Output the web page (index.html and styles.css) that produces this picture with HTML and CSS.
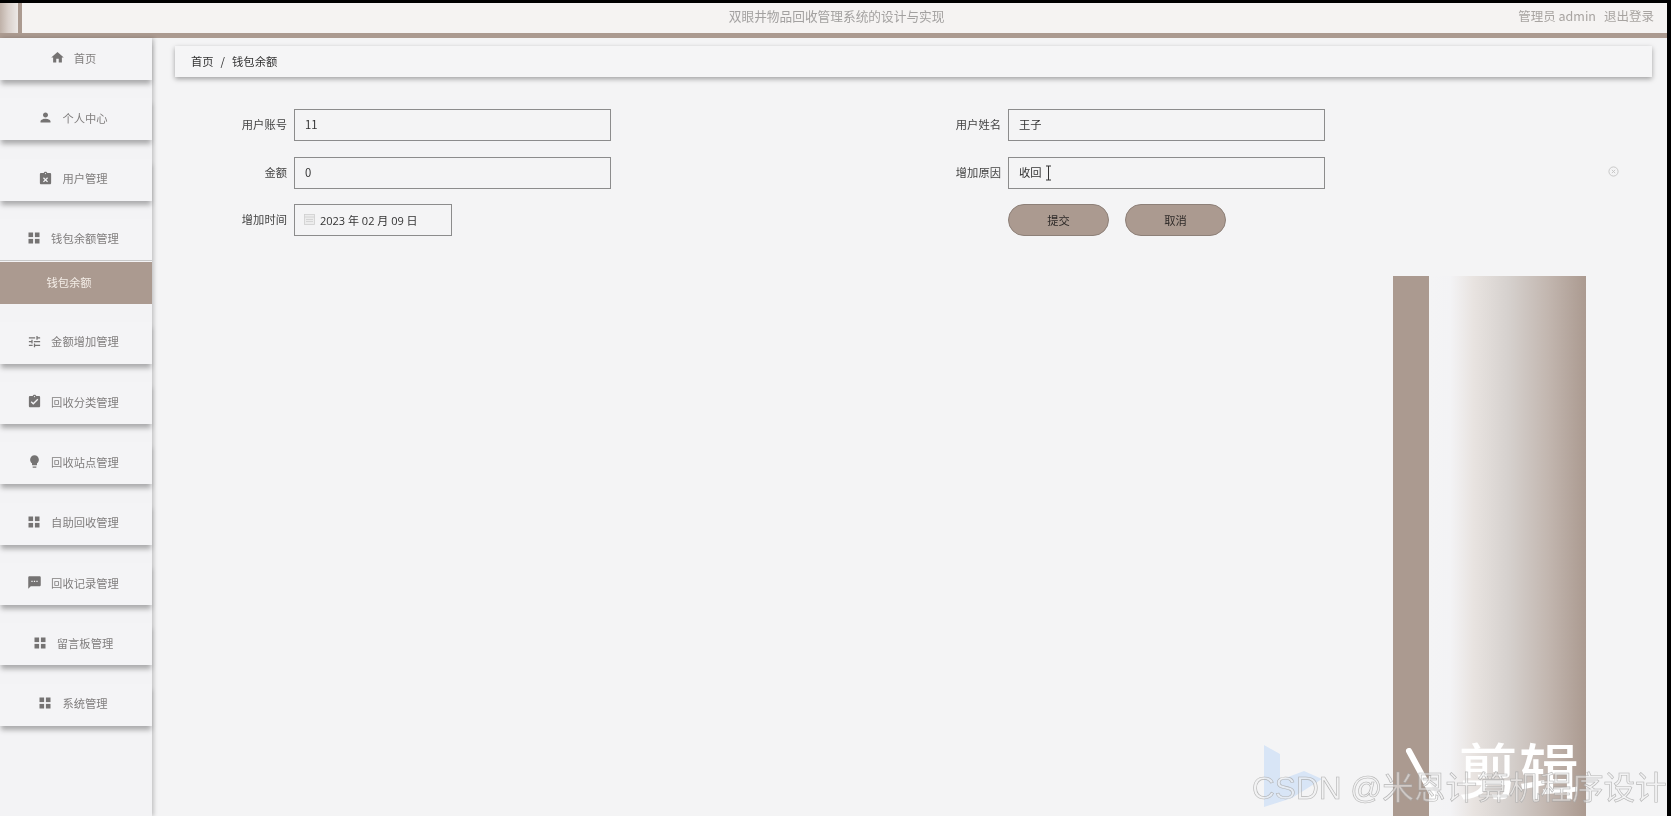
FILE: index.html
```html
<!DOCTYPE html>
<html lang="zh-CN">
<head>
<meta charset="utf-8">
<title>双眼井物品回收管理系统的设计与实现</title>
<link rel="stylesheet" href="styles.css">
</head>
<body>
<svg class="defs" width="0" height="0" aria-hidden="true">
  <symbol id="i-grid" viewBox="0 0 12 12"><rect x="0.5" y="0.5" width="4.6" height="4.6"/><rect x="6.9" y="0.5" width="4.6" height="4.6"/><rect x="0.5" y="6.9" width="4.6" height="4.6"/><rect x="6.9" y="6.9" width="4.6" height="4.6"/></symbol>
</svg>
<div class="app">
  <header class="topbar">
    <div class="logo"></div>
    <div class="title">双眼井物品回收管理系统的设计与实现</div>
    <div class="user"><span>管理员 admin</span><span>退出登录</span></div>
  </header>
  <div class="body">
    <nav class="side">
      <a class="item"><svg class="ic" viewBox="0 0 24 24"><path d="M10 20v-6h4v6h5v-8h3L12 3 2 12h3v8z"/></svg>首页</a>
      <a class="item"><svg class="ic" viewBox="0 0 24 24"><path d="M12 12c2.21 0 4-1.79 4-4s-1.79-4-4-4-4 1.79-4 4 1.79 4 4 4zm0 2c-2.67 0-8 1.34-8 4v2h16v-2c0-2.66-5.33-4-8-4z"/></svg>个人中心</a>
      <a class="item"><svg class="ic" viewBox="0 0 24 24"><path d="M19 3h-4.18C14.4 1.84 13.3 1 12 1c-1.3 0-2.4.84-2.82 2H5c-1.1 0-2 .9-2 2v14c0 1.1.9 2 2 2h14c1.1 0 2-.9 2-2V5c0-1.1-.9-2-2-2zm-7 0c.55 0 1 .45 1 1s-.45 1-1 1-1-.45-1-1 .45-1 1-1zm4 13.6L14.6 18 12 15.4 9.400 18 8 16.600 10.600 14 8 11.400 9.400 10 12 12.600 14.600 10 16 11.400 13.400 14z"/></svg>用户管理</a>
      <div class="group">
        <a class="item joined"><svg class="ic grid" viewBox="0 0 12 12"><use href="#i-grid"/></svg>钱包余额管理</a>
        <a class="sub">钱包余额</a>
      </div>
      <a class="item"><svg class="ic" viewBox="0 0 24 24"><path d="M3 17v2h6v-2H3zM3 5v2h10V5H3zm10 16v-2h8v-2h-8v-2h-2v6h2zM7 9v2H3v2h4v2h2V9H7zm14 4v-2H11v2h10zm-6-4h2V7h4V5h-4V3h-2v6z"/></svg>金额增加管理</a>
      <a class="item"><svg class="ic" viewBox="0 0 24 24"><path d="M19 3h-4.180C14.400 1.840 13.300 1 12 1c-1.300 0-2.400.840-2.820 2H5c-1.100 0-2 .900-2 2v14c0 1.100.900 2 2 2h14c1.100 0 2-.900 2-2V5c0-1.100-.900-2-2-2zm-7 0c.550 0 1 .450 1 1s-.450 1-1 1-1-.450-1-1 .450-1 1-1zm-2 14l-4-4 1.410-1.410L10 14.170l6.590-6.590L18 9l-8 8z"/></svg>回收分类管理</a>
      <a class="item"><svg class="ic" viewBox="0 0 24 24"><path d="M9 21c0 .55.45 1 1 1h4c.55 0 1-.45 1-1v-1H9v1zm3-19C8.140 2 5 5.140 5 9c0 2.380 1.190 4.470 3 5.740V17c0 .55.45 1 1 1h6c.55 0 1-.45 1-1v-2.260c1.810-1.270 3-3.360 3-5.740 0-3.860-3.140-7-7-7z"/></svg>回收站点管理</a>
      <a class="item"><svg class="ic grid" viewBox="0 0 12 12"><use href="#i-grid"/></svg>自助回收管理</a>
      <a class="item"><svg class="ic" viewBox="0 0 24 24"><path d="M20 2H4c-1.100 0-1.990.9-1.990 2L2 22l4-4h14c1.100 0 2-.9 2-2V4c0-1.100-.9-2-2-2zM9 11H7V9h2v2zm4 0h-2V9h2v2zm4 0h-2V9h2v2z"/></svg>回收记录管理</a>
      <a class="item"><svg class="ic grid" viewBox="0 0 12 12"><use href="#i-grid"/></svg>留言板管理</a>
      <a class="item"><svg class="ic grid" viewBox="0 0 12 12"><use href="#i-grid"/></svg>系统管理</a>
    </nav>
    <main class="main">
      <div class="crumb"><span>首页</span><span class="sep">/</span><span>钱包余额</span></div>
      <form class="form">
        <div class="field"><label>用户账号</label><input class="ctl" value="11"></div>
        <div class="field"><label>用户姓名</label><input class="ctl" value="王子"></div>
        <div class="field"><label>金额</label><input class="ctl" value="0"></div>
        <div class="field">
          <label>增加原因</label>
          <div class="reason">
            <input class="ctl" value="收回">
            <svg class="beam" viewBox="0 0 7 16"><path d="M1 1h5M3.500 1v14M1 15h5"/></svg>
          </div>
          <svg class="clear" viewBox="0 0 12 12"><circle cx="6" cy="6" r="5"/><path d="M4.200 4.200l3.600 3.600M7.800 4.200l-3.600 3.600"/></svg>
        </div>
        <div class="field">
          <label>增加时间</label>
          <div class="date">
            <svg class="cal" viewBox="0 0 11 11"><rect x="0.500" y="0.500" width="10" height="10"/><path d="M0.500 3h10M2 5.500h7M2 7.500h7"/></svg>
            <span>2023 年 02 月 09 日</span>
          </div>
        </div>
        <div class="field actions">
          <button type="button" class="btn">提交</button>
          <button type="button" class="btn">取消</button>
        </div>
      </form>
      <div class="pillar"><div class="bar"></div><div class="fade"></div></div>
    </main>
  </div>
  <div class="marks">
    <svg class="bili" viewBox="0 0 62 62"><path d="M2 0l16 9v26l24-9 18 8-30 19-28 9z"/></svg>
    <svg class="slash" viewBox="0 0 36 54"><path d="M4 3l26 48"/></svg>
    <span class="cut">剪辑</span>
    <span class="csdn">CSDN @米恩计算机程序设计</span>
  </div>
</div>
</body>
</html>
```
FILE: styles.css
```css
* { box-sizing: border-box; }
html, body { margin: 0; height: 100%; overflow: hidden; background: #000; }
body { font-family: "Noto Sans CJK SC", "Noto Sans", sans-serif; font-size: 11.300px; color: #333; }
.defs { position: absolute; }
.app {
  position: relative; display: flex; flex-direction: column;
  height: 813px; width: 1667px; margin-top: 3px;
  background: #f4f4f5; overflow: hidden;
  filter: blur(.45px);
}
.topbar {
  flex: none; height: 35px; display: flex; align-items: center;
  background: #f5f3f2; border-bottom: 5px solid #ab9a90;
}
.logo {
  flex: none; align-self: stretch; width: 22px;
  border-right: 4px solid #ab9a90;
  background: linear-gradient(90deg, #bfb1a8, #d9d0cb 45%, #ece8e6);
}
.title { flex: 1; text-align: center; color: #a3a1a0; font-size: 12.700px; padding: 0 0 5px 133px; }
.user { flex: none; display: flex; gap: 8px; padding: 0 13px 5px 0; color: #a8a4a1; font-size: 12.500px; }
.body { flex: 1; display: flex; min-height: 0; }
.side {
  flex: none; width: 152px; display: flex; flex-direction: column;
  background: #f3f3f5; box-shadow: 2px 0 4px rgba(0,0,0,.2);
  position: relative; z-index: 1;
}
.item {
  flex: none; display: flex; align-items: center; justify-content: center; gap: 9px;
  height: 42px; margin-bottom: 18.300px; padding: 0 6px 3px 0;
  background: #f4f4f6; color: #807e7e;
  box-shadow: 0 5px 5px -1px rgba(0,0,0,.3);
}
.ic { flex: none; width: 15px; height: 15px; fill: #757373; }
.ic.grid { width: 12px; height: 12px; margin-right: 2px; margin-left: 1px; }
.group { display: flex; flex-direction: column; margin-bottom: 18px; }
.item.joined { margin-bottom: 1px; box-shadow: none; border-bottom: 1px solid #c8c8c8; }
.sub {
  height: 42px; display: flex; align-items: center; justify-content: center; padding: 0 14px 1px 0;
  background: #ab9a90; color: #f3ece6;
}
.main { flex: 1; position: relative; min-width: 0; padding: 8px 15px 0 23px; }
.crumb {
  height: 31px; display: flex; align-items: center; gap: 7px; padding: 0 0 2px 16px;
  background: #f5f5f6; color: #333; box-shadow: 0 2px 5px rgba(0,0,0,.35);
}
.form {
  display: grid; grid-template-columns: 714px 714px; row-gap: 15.500px; margin-top: 32px;
}
.field { display: flex; align-items: center; gap: 7px; height: 32px; position: relative; }
.field label { flex: none; width: 112px; text-align: right; color: #444; padding-bottom: 2px; }
.ctl {
  width: 317px; height: 32px; padding: 0 10px 2px; margin: 0;
  border: 1.500px solid #8c8c8c; border-radius: 0; background: #f4f4f5;
  font: inherit; color: #333;
}
.reason { position: relative; }
.beam {
  position: absolute; left: 37px; top: 8px; width: 7px; height: 16px;
  fill: none; stroke: #333; stroke-width: 1;
}
.clear {
  position: absolute; left: 719px; top: 9px; width: 11px; height: 11px;
  fill: none; stroke: #c4c4c4; stroke-width: 1;
}
.date {
  width: 158px; height: 32px; display: flex; align-items: center; gap: 5px; padding-left: 9px;
  border: 1.500px solid #8c8c8c; font-family: "Open Sans", "Noto Sans CJK SC", sans-serif; font-size: 11px; color: #333;
}
.cal { width: 11px; height: 11px; margin-top: -2px; fill: #ececec; stroke: #cfcfcf; stroke-width: .8; }
.actions { gap: 16px; padding-left: 119px; }
.btn {
  width: 101px; height: 32px; padding: 0 0 1px; border: 1px solid #8d8078; border-radius: 16px;
  background: #ab9a90; color: #2e2a28; font: inherit;
}
.pillar { position: absolute; left: 1241px; top: 238px; bottom: 0; display: flex; gap: 1px; }
.bar { width: 36px; background: #ab9a90; }
.fade {
  width: 156px;
  background: linear-gradient(90deg, #f4f4f5 0, #f3f3f5 13%, #e8e3e0 28%, #d6d1ce 50%, #c2b6af 76%, #ab9a90 100%);
}
.marks { position: absolute; inset: 0; pointer-events: none; }
.bili { position: absolute; left: 1262px; top: 742px; width: 62px; height: 62px; fill: #cfe0f7; opacity: .75; }
.slash { position: absolute; left: 1405px; top: 745px; width: 36px; height: 54px; fill: none; stroke: #fff; stroke-width: 6; stroke-linecap: round; }
.cut { position: absolute; left: 1458px; top: 727px; font-size: 60px; line-height: 76px; font-weight: 500; color: #fff; letter-spacing: 1px; }
.csdn {
  position: absolute; left: 1252px; top: 765px; white-space: nowrap;
  font-family: "Liberation Sans", "Noto Sans CJK SC", sans-serif; font-size: 31.600px; line-height: 40px;
  color: rgba(240,240,240,.55); -webkit-text-stroke: .6px rgba(160,160,160,.75);
}
```
